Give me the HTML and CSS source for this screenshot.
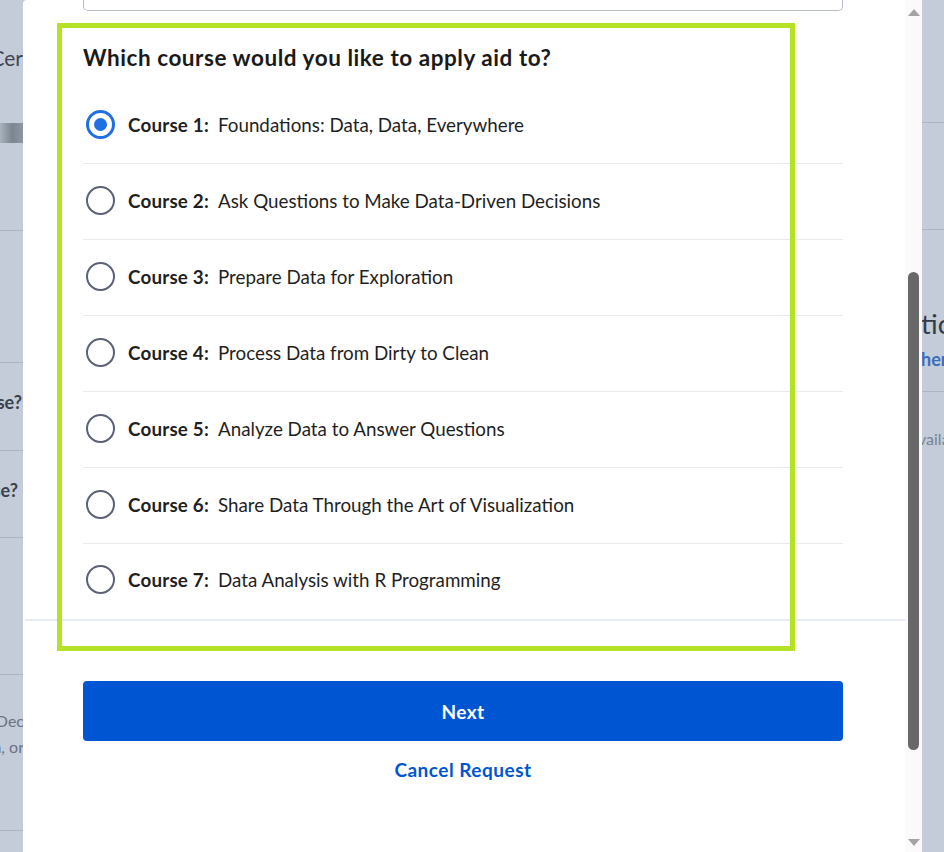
FILE: index.html
```html
<!DOCTYPE html>
<html lang="en">
<head>
<meta charset="utf-8">
<title>Financial aid – choose course</title>
<link rel="stylesheet" href="styles.css">
</head>
<body>
<div class="page">
  <div class="page-left">
    <div class="bl bl-cert"><span class="bg-title">Professional Cer</span></div>
    <div class="bl bl-img"></div>
    <div class="bl bl-line l1"></div>
    <div class="bl bl-line l2"></div>
    <div class="bl bl-q1"><span class="bg-q">Why this course?</span></div>
    <div class="bl bl-line l3"></div>
    <div class="bl bl-q2"><span class="bg-q">Can you afford the course?</span></div>
    <div class="bl bl-line l4"></div>
    <div class="bl bl-line l5"></div>
    <div class="bl bl-p1"><span class="bg-p">Requests are reviewed in Dec</span></div>
    <div class="bl bl-p2"><span class="bg-p">application, or</span></div>
    <div class="bl bl-line l6"></div>
  </div>
  <div class="page-right">
    <div class="br-line r1"></div>
    <div class="br-line r2"></div>
    <div class="br-h">tics</div>
    <div class="br-link">here</div>
    <div class="br-line r3"></div>
    <div class="br-p">vailable</div>
  </div>
</div>

<div class="modal">
  <div class="modal-body">
    <div class="input-stub"></div>
    <section class="question">
      <h2 class="q-title">Which course would you like to apply aid to?</h2>
      <ul class="options">
        <li class="option"><span class="radio checked"></span><span class="label"><b>Course 1:</b>Foundations: Data, Data, Everywhere</span></li>
        <li class="option"><span class="radio"></span><span class="label"><b>Course 2:</b>Ask Questions to Make Data-Driven Decisions</span></li>
        <li class="option"><span class="radio"></span><span class="label"><b>Course 3:</b>Prepare Data for Exploration</span></li>
        <li class="option"><span class="radio"></span><span class="label"><b>Course 4:</b>Process Data from Dirty to Clean</span></li>
        <li class="option"><span class="radio"></span><span class="label"><b>Course 5:</b>Analyze Data to Answer Questions</span></li>
        <li class="option"><span class="radio"></span><span class="label"><b>Course 6:</b>Share Data Through the Art of Visualization</span></li>
        <li class="option"><span class="radio"></span><span class="label"><b>Course 7:</b>Data Analysis with R Programming</span></li>
      </ul>
    </section>
    <footer class="modal-footer">
      <button class="btn-next">Next</button>
      <a class="cancel" href="#">Cancel Request</a>
    </footer>
    <div class="highlight"></div>
  </div>
  <div class="scrollbar">
    <span class="arrow up"></span>
    <div class="track"><div class="thumb"></div></div>
    <span class="arrow down"></span>
  </div>
</div>
</body>
</html>
```

FILE: styles.css
```css
* { box-sizing: border-box; }
html, body { margin: 0; padding: 0; }
body {
  width: 944px;
  height: 852px;
  overflow: hidden;
  background: #c3ccd8;
  font-family: "Source Sans Pro", Lato, "Liberation Sans", sans-serif;
  position: relative;
}

/* background page (dimmed by overlay) */
.page {
  display: flex;
  justify-content: space-between;
  height: 852px;
}
.page-left {
  width: 40px;
  display: flex;
  flex-direction: column;
}
.bl {
  display: flex;
  justify-content: flex-end;
  white-space: nowrap;
  flex: none;
}
.bl-cert { margin-top: 43px; height: 28px; align-items: center; }
.bg-title { font-size: 21px; color: #3f4553; margin-right: 17px; }
.bl-img {
  margin-top: 52px;
  height: 20px;
  background: linear-gradient(90deg, #a9b3bd 0%, #7c8692 30%, #8e98a4 60%, #a3adb8 100%);
}
.bl-line { height: 1px; background: #adb5c1; }
.l1 { margin-top: 87px; }
.l2 { margin-top: 131px; }
.bl-q1 { margin-top: 27px; height: 24px; align-items: center; }
.bg-q { font-size: 18px; font-weight: 700; color: #3a404c; margin-right: 18px; }
.l3 { margin-top: 36px; }
.bl-q2 { margin-top: 27px; height: 24px; align-items: center; }
.bl-q2 .bg-q { margin-right: 22px; }
.l4 { margin-top: 35px; }
.l5 { margin-top: 136px; }
.bl-p1 { margin-top: 34px; height: 22px; align-items: center; }
.bl-p2 { margin-top: 2px; height: 26px; align-items: center; }
.bg-p { font-size: 16px; color: #6b7382; margin-right: 16px; }
.l6 { margin-top: 71px; }

.page-right {
  width: 23px;
  display: flex;
  flex-direction: column;
  white-space: nowrap;
  overflow: hidden;
}
.br-line { height: 1px; background: #adb5c1; flex: none; }
.r1 { margin-top: 122px; }
.r2 { margin-top: 106px; }
.br-h { margin-top: 77px; font-size: 27px; color: #343a46; line-height: 34px; }
.br-link { margin-top: 6px; font-size: 18px; font-weight: 700; color: #3c6bbd; line-height: 24px; }
.r3 { margin-top: 20px; }
.br-p { margin-top: 36px; font-size: 16px; color: #7a8290; line-height: 22px; margin-left: -3px; }

/* modal overlay */
.modal {
  position: absolute;
  left: 23px;
  top: 0;
  width: 899px;
  height: 852px;
  background: #ffffff;
  display: flex;
  border-top-left-radius: 4px;
}
.modal-body {
  position: relative;
  flex: 1;
  display: flex;
  flex-direction: column;
}
.input-stub {
  margin: 0 62px 0 60px;
  height: 11px;
  border: 1px solid #b5bcc8;
  border-top: none;
  border-radius: 0 0 5px 5px;
}
.question { padding: 0 62px 0 60px; }
.q-title {
  margin: 33px 0 0;
  font-size: 22.5px;
  letter-spacing: 0.55px;
  line-height: 28px;
  font-weight: 700;
  color: #1a1a1a;
}
.options {
  list-style: none;
  margin: 16px 0 0;
  padding: 0;
}
.option {
  height: 76px;
  display: flex;
  align-items: center;
  gap: 13px;
  padding-left: 3px;
  border-bottom: 1px solid #e8eaee;
  padding-bottom: 2px;
}
.option:last-child { border-bottom: none; height: 75px; padding-bottom: 4px; }
.radio {
  width: 29px;
  height: 29px;
  flex: none;
  border-radius: 50%;
  border: 2.6px solid #5b6177;
  display: flex;
  align-items: center;
  justify-content: center;
}
.radio.checked { border: 3px solid #1f6fe5; }
.radio.checked::after {
  content: "";
  width: 13px;
  height: 13px;
  border-radius: 50%;
  background: #1f6fe5;
}
.label {
  font-size: 18.8px;
  line-height: 24px;
  color: #1f1f1f;
}
.label b { font-weight: 700; letter-spacing: 0.2px; margin-right: 9px; }

.modal-footer {
  margin-left: 2px;
  border-top: 2px solid #e7ebf3;
  padding: 60px 62px 0 58px;
  display: flex;
  flex-direction: column;
  align-items: center;
}
.btn-next {
  width: 100%;
  height: 60px;
  border: none;
  border-radius: 4px;
  background: #0056d2;
  color: #ffffff;
  font-family: inherit;
  font-size: 19px;
  letter-spacing: 0.4px;
  font-weight: 700;
}
.cancel {
  margin-top: 17px;
  font-size: 19px;
  letter-spacing: 0.5px;
  line-height: 24px;
  font-weight: 700;
  color: #0056d2;
  text-decoration: none;
}
.highlight {
  position: absolute;
  left: 34px;
  top: 23px;
  width: 738px;
  height: 628px;
  border: 5px solid #b5e224;
  pointer-events: none;
}

/* scrollbar */
.scrollbar {
  width: 17px;
  background: #fafafa;
  display: flex;
  flex-direction: column;
  align-items: center;
}
.arrow { width: 0; height: 0; flex: none; }
.arrow.up {
  margin-top: 9px;
  border-left: 6px solid transparent;
  border-right: 6px solid transparent;
  border-bottom: 7px solid #a3a3a3;
}
.arrow.down {
  margin-bottom: 6px;
  border-left: 6px solid transparent;
  border-right: 6px solid transparent;
  border-top: 7px solid #a3a3a3;
}
.track { flex: 1; width: 100%; display: flex; justify-content: center; }
.thumb {
  margin-top: 256px;
  width: 11px;
  height: 478px;
  background: #686868;
  border-radius: 6px;
}
```
